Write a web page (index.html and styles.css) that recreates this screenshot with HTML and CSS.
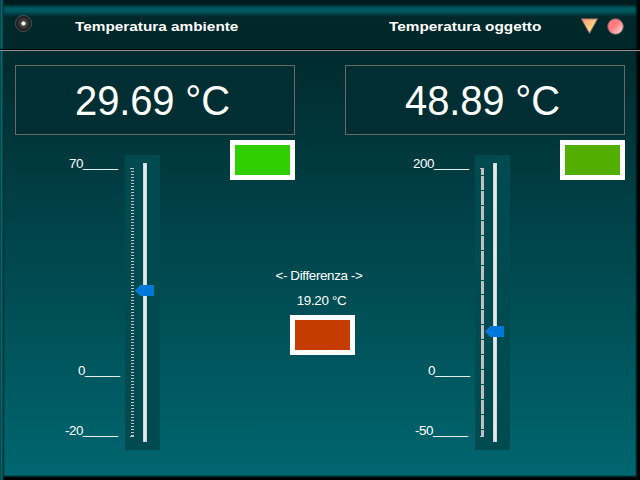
FILE: index.html
```html
<!DOCTYPE html>
<html lang="it">
<head>
<meta charset="utf-8">
<title>Temperatura</title>
<link rel="stylesheet" href="styles.css">
</head>
<body>
<div class="window">
  <header class="titlebar">
    <svg class="sensor" width="18" height="18" viewBox="0 0 18 18">
      <defs><radialGradient id="lens"><stop offset="0" stop-color="#808080"/><stop offset=".45" stop-color="#404040"/><stop offset="1" stop-color="#101010"/></radialGradient></defs>
      <circle cx="8.5" cy="8.5" r="8" fill="url(#lens)" stroke="#4c5656"/>
      <circle cx="8.5" cy="8.5" r="2" fill="#fff"/>
    </svg>
    <h1 class="title ambient">Temperatura ambiente</h1>
    <h1 class="title object">Temperatura oggetto</h1>
    <svg class="controls" width="46" height="18" viewBox="0 0 46 18">
      <defs>
        <linearGradient id="amber" x2="1" y2="1"><stop offset="0" stop-color="#ff9a70"/><stop offset=".6" stop-color="#ffd080"/></linearGradient>
        <linearGradient id="rose" x2="1" y2="1"><stop offset=".45" stop-color="#ff7c7c"/><stop offset=".9" stop-color="#ffd8d8"/></linearGradient>
      </defs>
      <path d="M1.2 .8H17.7L9.5 15.5Z" fill="url(#amber)" stroke="#695f68"/>
      <circle cx="35.5" cy="8.5" r="7.8" fill="url(#rose)" stroke="#695f68"/>
    </svg>
  </header>
  <main class="content">
    <div class="readouts">
      <div class="readout"><span>29.69 °C</span></div>
      <div class="readout"><span>48.89 °C</span></div>
    </div>
    <div class="gauges">
      <div class="scale">
        <div class="mark"><span class="number">70</span><span>_____</span></div>
        <div class="mark zero"><span class="number">0</span><span>_____</span></div>
        <div class="mark"><span class="number">-20</span><span>_____</span></div>
      </div>
      <svg class="slider" width="35" height="295" viewBox="0 0 35 295" shape-rendering="crispEdges">
        <path d="M7.5 13V282" stroke="#c0c0c0" stroke-width="3" stroke-dasharray="1 2"/>
        <path d="M5 13.5H9M5 281.5H9" stroke="#c0c0c0"/>
        <path d="M18 8h4v279h-4z" fill="#d2d6d6"/><path d="M19 9h2v277h-2z" fill="#e7eaea"/>
        <path d="M15 130H29V141H15L10 136V135Z" fill="#0078d7"/>
      </svg>
      <div class="swatch ambient-color"></div>
      <section class="difference">
        <div class="label">&lt;- Differenza -&gt;</div>
        <div class="value">19.20 °C</div>
        <div class="swatch difference-color"></div>
      </section>
      <div class="scale">
        <div class="mark wide"><span class="number">200</span><span>_____</span></div>
        <div class="mark zero"><span class="number">0</span><span>_____</span></div>
        <div class="mark"><span class="number">-50</span><span>_____</span></div>
      </div>
      <svg class="slider" width="35" height="295" viewBox="0 0 35 295" shape-rendering="crispEdges">
        <path d="M7.5 13V282" stroke="#c0c0c0" stroke-width="3"/>
        <path d="M7.5 20V281" stroke="#004b50" stroke-width="3" stroke-dasharray="1 13.93"/>
        <path d="M5 13.5H9M5 281.5H9" stroke="#c0c0c0"/>
        <path d="M18 8h4v279h-4z" fill="#d2d6d6"/><path d="M19 9h2v277h-2z" fill="#e7eaea"/>
        <path d="M15 171H29V182H15L10 177V176Z" fill="#0078d7"/>
      </svg>
      <div class="swatch object-color"></div>
    </div>
  </main>
</div>
</body>
</html>
```
FILE: styles.css
```css
* { box-sizing: border-box; }
body { margin: 0; background: #000; color: #fff; font-family: "Liberation Sans", Arial, sans-serif; }
.window {
  width: 640px; height: 480px; overflow: hidden;
  background:
    linear-gradient(90deg, #001c1f, #006b73 1px, #006970 2px, #002e32 3px, transparent 5px),
    linear-gradient(90deg, transparent 635px, #001315 637px, #000 638px),
    linear-gradient(transparent 475px, #001315 477px, #000 478px),
    linear-gradient(#001b1d 0, #001b1d 4px, #005960 8px, #005960 11px, #00272a 17px, #00272a 49px, #002a2d 51px, #00666f 475px);
}
.titlebar { display: flex; height: 51px; padding: 15px 0 0 15px; border-bottom: 1px solid #969696; box-shadow: inset 0 -1px #000; }
.sensor { flex: none; }
.title { margin: 4px 0 0; height: 16px; font-size: 13px; line-height: 16px; font-weight: bold; white-space: nowrap; transform-origin: left; }
.ambient { width: 314px; margin-left: 42px; transform: scaleX(1.18); }
.object { width: 191px; transform: scaleX(1.18); }
.controls { flex: none; margin-top: 3px; }
.content { padding: 14px 15px 0; }
.readouts { display: flex; justify-content: space-between; }
.readout { display: flex; align-items: center; justify-content: center; width: 280px; height: 70px; border: 1px solid #696969; background: #002e32; font-size: 40px; letter-spacing: -.15px; padding-right: 5px; }
.readout span { transform: scaleY(1.04); }
.gauges { display: grid; grid-template-columns: 110px 35px 70px 65px 50px 130px 35px 50px 65px; align-items: start; margin-top: 5px; width: 610px; }
.slider { margin-top: 15px; background: #004b50; }
.swatch { width: 65px; height: 40px; border: 5px solid #fff; }
.ambient-color { grid-column: 4; background: #30d000; }
.object-color { grid-column: 9; background: #52ae00; }
.difference-color { margin-left: 6px; background: #c43c00; }
.scale { display: flex; flex-direction: column; align-items: flex-end; padding: 16px 7px 0 0; font-size: 12.6px; line-height: 15px; white-space: nowrap; }
.mark { display: flex; height: 15px; }
.number { font-size: 13.4px; letter-spacing: -.45px; }
.wide { margin-right: -1px; }
.zero { margin: 192px -2px 45px 0; }
.difference { display: flex; flex-direction: column; align-items: center; width: 90px; margin: 128px 0 0 -21px; font-size: 13.4px; letter-spacing: -.35px; line-height: 16px; white-space: nowrap; }
.value { margin: 9px 0 6px 5px; }
```
